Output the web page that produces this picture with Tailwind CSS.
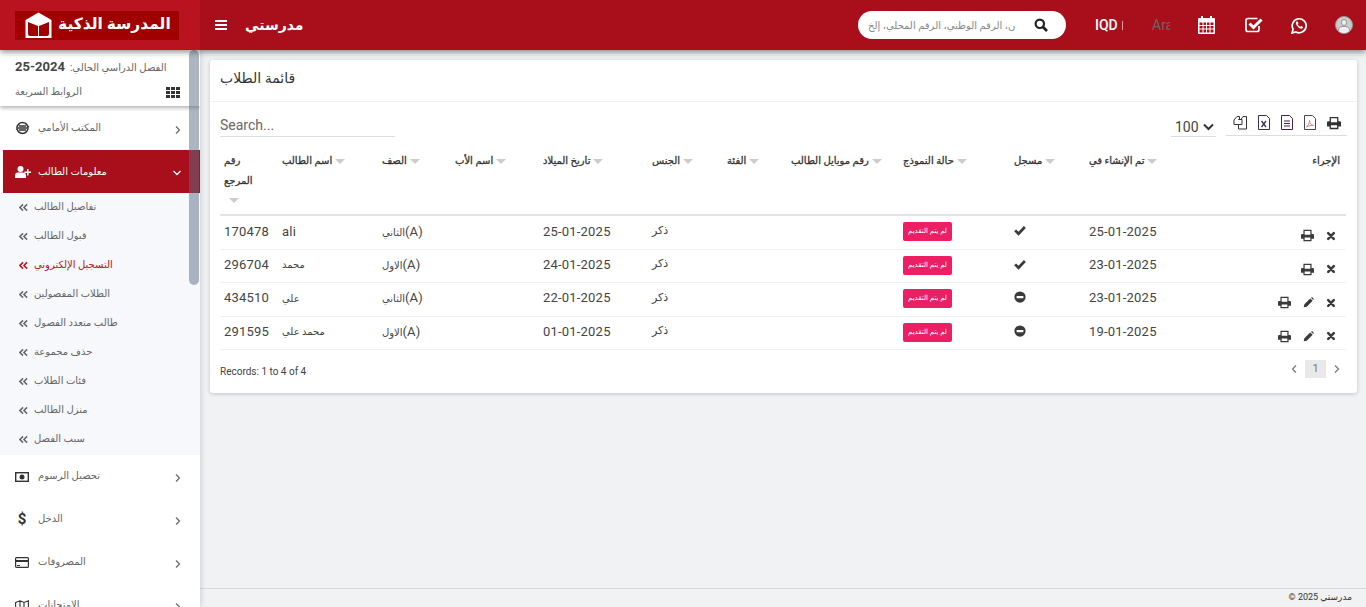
<!DOCTYPE html>
<html lang="ar">
<head>
    <meta charset="UTF-8">
    <title>مدرستي</title>
    <script src="https://cdn.jsdelivr.net/npm/@tailwindcss/browser@4"></script>
</head>
<body class="h-screen overflow-hidden flex flex-col bg-[#f1f2f4] text-[#444] font-['Roboto','DejaVu_Sans',sans-serif]">
    <svg class="hidden">
        <symbol id="print" viewBox="0 0 16 16"><path fill-rule="evenodd" d="M3 1h10v5h1.500A1.500 1.500 0 0 1 16 7.500V12h-3v3H3v-3H0V7.500A1.500 1.500 0 0 1 1.500 6H3zM4.500 2.500V7h7V2.500zM4.500 10.500v3h7v-3z" fill="currentColor"/></symbol>
        <symbol id="times" viewBox="0 0 16 16"><path d="M3.500 3.500l9 9M12.500 3.500l-9 9" stroke="currentColor" stroke-width="4" fill="none" stroke-linecap="round"/></symbol>
        <symbol id="pencil" viewBox="0 0 16 16"><path d="M1 15l1-4.500L10.500 2l3.500 3.500L5.500 14zM11.500 1l.7-.4a1.500 1.500 0 0 1 1.800.2l1.200 1.200a1.500 1.500 0 0 1 .2 1.800l-.4.700z" fill="currentColor"/></symbol>
        <symbol id="check" viewBox="0 0 16 16"><path d="M1.500 8.500l4.500 4.500 8.500-9" stroke="currentColor" stroke-width="3.600" fill="none"/></symbol>
        <symbol id="minus" viewBox="0 0 16 16"><path fill-rule="evenodd" d="M8 0.500a7.500 7.500 0 1 0 0 15A7.500 7.500 0 0 0 8 0.500zM3.500 6.500h9v3h-9z" fill="currentColor"/></symbol>
        <symbol id="chev" viewBox="0 0 8 10"><path d="M2 1.500L5.500 5 2 8.500" stroke="currentColor" stroke-width="1.200" fill="none"/></symbol>
        <symbol id="dbl" viewBox="0 0 10 10"><path d="M4.500 1.500L1 5l3.500 3.500M9 1.500L5.500 5 9 8.500" stroke="currentColor" stroke-width="1.700" fill="none"/></symbol>
    </svg>

    <!-- header -->
    <header class="h-[50px] flex shrink-0 bg-[#a90e1b] text-white shadow-[0_2px_6px_rgba(0,0,0,0.45)] z-20 relative">
        <div class="w-[200px] bg-[#b91320] flex items-center pl-[15px] shrink-0">
            <div class="w-[164px] h-[29px] bg-[#a00000] flex items-center pl-[10px] gap-[6px]">
                <svg class="shrink-0" width="27" height="27" viewBox="0 0 27 27"><path d="M13.500 0.500L26.500 8v18H0.500V8z" fill="#fff"/><path d="M3 10l10 4v10H5a2 2 0 0 1-2-2zM24 10l-10 4v10h8a2 2 0 0 0 2-2z" fill="#a00000"/></svg>
                <span dir="rtl" class="text-[15.5px] font-bold whitespace-nowrap leading-none">المدرسة الذكية</span>
            </div>
        </div>
        <div class="flex-1 flex items-center pl-[15px] pr-[13px]">
            <svg width="12" height="10" viewBox="0 0 12 10" fill="#fff"><path d="M0 0h12v2H0zM0 4h12v2H0zM0 8h12v2H0z"/></svg>
            <span dir="rtl" class="ml-[18px] text-[14px] font-bold">مدرستي</span>
            <div class="ml-auto w-[208px] h-[28px] rounded-full bg-white flex items-center pl-[10px] pr-[18px]">
                <div class="w-[147px] overflow-hidden whitespace-nowrap text-[10px] text-[#888]"><span dir="rtl">ابحث بالعنوان، الرقم الوطني، الرقم المحلي، إلخ</span></div>
                <svg class="ml-auto text-[#222]" width="14" height="14" viewBox="0 0 14 14"><circle cx="5.800" cy="5.800" r="4.200" stroke="currentColor" stroke-width="2.200" fill="none"/><path d="M9 9l4 4" stroke="currentColor" stroke-width="2.600"/></svg>
            </div>
            <div class="w-[23px] ml-[29px] text-[14px] font-medium">IQD</div>
            <div class="w-px h-[9px] bg-white/60 ml-[4px]"></div>
            <div class="w-[18px] ml-[29px] text-[14px] text-[#666] overflow-hidden">Ara</div>
            <svg class="ml-[28px]" width="17" height="18" viewBox="0 0 17 18" fill="#fff"><path fill-rule="evenodd" d="M3 0h2v2h7V0h2v2h2a1 1 0 0 1 1 1v14a1 1 0 0 1-1 1H1a1 1 0 0 1-1-1V3a1 1 0 0 1 1-1h2zM1.500 6.500v2.500h3V6.500zM5.500 6.500v2.500h2.500V6.500zM9 6.500v2.500h2.500V6.500zM12.500 6.500v2.500h3V6.500zM1.500 10v2.500h3V10zM5.500 10v2.500h2.500V10zM9 10v2.500h2.500V10zM12.500 10v2.500h3V10zM1.500 13.500v3h3v-3zM5.500 13.500v3h2.500v-3zM9 13.500v3h2.500v-3zM12.500 13.500v3h3v-3z"/></svg>
            <svg class="ml-[30px]" width="18" height="16" viewBox="0 0 18 16"><path d="M14 9v3.500A2 2 0 0 1 12 14.500H3a2 2 0 0 1-2-2v-9a2 2 0 0 1 2-2h9.500" stroke="#fff" stroke-width="1.700" fill="none"/><path d="M4.500 6.500l4 4L16.500 2.500" stroke="#fff" stroke-width="3" fill="none"/></svg>
            <svg class="ml-[28px]" width="17" height="17" viewBox="0 0 17 17"><path d="M1 16l1.100-3.800A7 7 0 1 1 4.800 14.900z" stroke="#fff" stroke-width="1.700" fill="none"/><path d="M5.500 4.500c-1 1-.8 2.500.5 4.300s3 2.900 4.400 2.900c1 0 1.600-.7 1.700-1.600l-2-1.200-.9.900c-1-.4-2-1.400-2.500-2.500l.8-.9-1-2z" fill="#fff"/></svg>
            <div class="ml-[27px] w-[18px] h-[18px] shrink-0 rounded-full bg-[#ccc] relative overflow-hidden border border-[#999]">
                <div class="absolute left-[5px] top-[2px] w-[6px] h-[7px] rounded-full bg-[#eee] border border-[#999]"></div>
                <div class="absolute left-[2px] top-[9px] w-[12px] h-[9px] rounded-t bg-[#eee] border border-[#999]"></div>
            </div>
        </div>
    </header>

    <div class="flex-1 flex min-h-0">
        <!-- sidebar -->
        <aside class="w-[200px] shrink-0 bg-white relative shadow-[1px_0_6px_rgba(0,0,0,0.15)] z-10 overflow-hidden text-[10px] text-[#666]">
            <div class="h-[56px] pl-[15px] pr-[20px] pt-[8px] shadow-[0_2px_4px_rgba(0,0,0,0.3)] relative">
                <div class="flex items-center h-[18px] gap-[5px] whitespace-nowrap">
                    <span class="text-[13px] font-bold text-[#444]">25-2024</span>
                    <span dir="rtl">الفصل الدراسي الحالي:</span>
                </div>
                <div class="flex items-center justify-between h-[18px] mt-[6px]">
                    <span dir="rtl">الروابط السريعة</span>
                    <svg class="mt-[2px]" width="14" height="11" viewBox="0 0 14 11" fill="#333"><path d="M0 0h4v3H0zM5 0h4v3H5zM10 0h4v3h-4zM0 4h4v3H0zM5 4h4v3H5zM10 4h4v3h-4zM0 8h4v3H0zM5 8h4v3H5zM10 8h4v3h-4z"/></svg>
                </div>
            </div>

            <div class="h-[44px] flex items-center pl-[15px] pr-[18px] gap-[8px]">
                <svg class="shrink-0" width="15" height="14" viewBox="0 0 15 14"><circle cx="7.500" cy="7" r="5.500" stroke="#333" stroke-width="1.500" fill="none"/><path d="M4 5h7M3 7h9M4 9h7" stroke="#333" stroke-width="1.300"/><path d="M0.500 8.500l2-1 .5 1.500zM14.500 5.500l-2 1-.5-1.500z" fill="#333"/></svg>
                <span dir="rtl" class="-mt-[1px]">المكتب الأمامي</span>
                <svg class="ml-auto mt-[4px]" width="8" height="10"><use href="#chev"/></svg>
            </div>

            <div class="h-[43px] ml-[3px] bg-[#a90e1b] text-white flex items-center pl-[12px] pr-[18px] gap-[7px] font-medium">
                <svg class="shrink-0" width="16" height="12" viewBox="0 0 16 12" fill="#fff"><circle cx="5.500" cy="3" r="3"/><path d="M0 12V9.500A3 3 0 0 1 3 6.500h5a3 3 0 0 1 3 3V12zM12 3h1.500v2.500H16V7h-2.500v2.500H12V7H9.500V5.500H12z"/></svg>
                <span dir="rtl" class="-mt-[1px]">معلومات الطالب</span>
                <svg class="ml-auto mt-[3px]" width="10" height="8" viewBox="0 0 10 8"><path d="M1.500 2L5 5.500 8.500 2" stroke="#fff" stroke-width="1.300" fill="none"/></svg>
            </div>

            <ul class="bg-[#f7f8fb] h-[262px]">
                <li class="h-[29px] flex items-center pl-[19px] gap-[6px]"><svg width="9" height="9"><use href="#dbl"/></svg><span dir="rtl" class="-mt-[2px]">تفاصيل الطالب</span></li>
                <li class="h-[29px] flex items-center pl-[19px] gap-[6px]"><svg width="9" height="9"><use href="#dbl"/></svg><span dir="rtl" class="-mt-[2px]">قبول الطالب</span></li>
                <li class="h-[29px] flex items-center pl-[19px] gap-[6px] text-[#b91320]"><svg width="9" height="9"><use href="#dbl"/></svg><span dir="rtl" class="-mt-[2px]">التسجيل الإلكتروني</span></li>
                <li class="h-[29px] flex items-center pl-[19px] gap-[6px]"><svg width="9" height="9"><use href="#dbl"/></svg><span dir="rtl" class="-mt-[2px]">الطلاب المفصولين</span></li>
                <li class="h-[29px] flex items-center pl-[19px] gap-[6px]"><svg width="9" height="9"><use href="#dbl"/></svg><span dir="rtl" class="-mt-[2px]">طالب متعدد الفصول</span></li>
                <li class="h-[29px] flex items-center pl-[19px] gap-[6px]"><svg width="9" height="9"><use href="#dbl"/></svg><span dir="rtl" class="-mt-[2px]">حذف مجموعة</span></li>
                <li class="h-[29px] flex items-center pl-[19px] gap-[6px]"><svg width="9" height="9"><use href="#dbl"/></svg><span dir="rtl" class="-mt-[2px]">فئات الطلاب</span></li>
                <li class="h-[29px] flex items-center pl-[19px] gap-[6px]"><svg width="9" height="9"><use href="#dbl"/></svg><span dir="rtl" class="-mt-[2px]">منزل الطالب</span></li>
                <li class="h-[29px] flex items-center pl-[19px] gap-[6px]"><svg width="9" height="9"><use href="#dbl"/></svg><span dir="rtl" class="-mt-[2px]">سبب الفصل</span></li>
            </ul>

            <div class="h-[43px] flex items-center pl-[15px] pr-[18px] gap-[9px]">
                <svg class="shrink-0" width="14" height="10" viewBox="0 0 14 10"><rect x="0.700" y="0.700" width="12.600" height="8.600" stroke="#333" stroke-width="1.400" fill="none"/><circle cx="7" cy="5" r="2.500" fill="#333"/></svg>
                <span dir="rtl" class="-mt-[2px]">تحصيل الرسوم</span>
                <svg class="ml-auto mt-[3px]" width="8" height="10"><use href="#chev"/></svg>
            </div>
            <div class="h-[43px] flex items-center pl-[15px] pr-[18px] gap-[9px]">
                <span class="w-[14px] text-[15px] font-bold text-[#333] text-center">$</span>
                <span dir="rtl" class="-mt-[2px]">الدخل</span>
                <svg class="ml-auto mt-[3px]" width="8" height="10"><use href="#chev"/></svg>
            </div>
            <div class="h-[43px] flex items-center pl-[15px] pr-[18px] gap-[9px]">
                <svg class="shrink-0" width="14" height="11" viewBox="0 0 14 11"><rect x="0.600" y="0.600" width="12.800" height="9.800" rx="1" stroke="#333" stroke-width="1.200" fill="none"/><path d="M0 3h14v2H0zM2 8h3v1H2z" fill="#333"/></svg>
                <span dir="rtl" class="-mt-[2px]">المصروفات</span>
                <svg class="ml-auto mt-[3px]" width="8" height="10"><use href="#chev"/></svg>
            </div>
            <div class="h-[43px] flex items-center pl-[15px] pr-[18px] gap-[9px]">
                <svg class="shrink-0" width="14" height="12" viewBox="0 0 14 12"><path d="M0.600 2.500L5 0.800l4 1.700 4.400-1.700v8.700L9 11.200 5 9.500 0.600 11.200zM5 0.800v8.700M9 2.500v8.700" stroke="#333" stroke-width="1.100" fill="none"/></svg>
                <span dir="rtl" class="-mt-[2px]">الامتحانات</span>
                <svg class="ml-auto mt-[3px]" width="8" height="10"><use href="#chev"/></svg>
            </div>

            <!-- scrollbar thumb -->
            <div class="absolute left-[189px] top-0 w-[10px] h-[235px] rounded-[5px] bg-[#5b6b85]/50"></div>
        </aside>

        <main class="flex-1 min-w-0 flex flex-col">
            <div class="flex-1 pt-[10px] pl-[10px] pr-[9px]">
                <section class="h-[333px] bg-white rounded-[3px] shadow-[0_1px_4px_rgba(0,0,0,0.2)]">
                    <div class="h-[42px] border-b border-[#f1f1f1] pl-[10px] pb-[4px] flex items-center">
                        <h1 dir="rtl" class="text-[14px] text-[#333]">قائمة الطلاب</h1>
                    </div>

                    <div class="h-[35px] mx-[10px] flex items-end">
                        <div class="w-[175px] h-[23px] border-b border-[#ddd] text-[14px] text-[#666] leading-[22px]">Search...</div>
                        <div class="ml-auto w-[45px] h-[23px] pt-[4px] border-b border-[#ddd] flex items-center gap-1 pl-1 text-[14px]">100
                            <svg width="11" height="8" viewBox="0 0 11 8"><path d="M1 1.500l4.500 4.500L10 1.500" stroke="#333" stroke-width="2" fill="none"/></svg>
                        </div>
                        <div class="ml-[10px] w-[121px] h-[26px] mb-px border-b border-[#ddd] flex items-center pl-[7px] gap-[11px]">
                            <svg width="14" height="15" viewBox="0 0 14 15" fill="none" stroke="#333"><path d="M5.500 4.500H9v5H1V5l3-3.500h2.500v3z"/><path d="M8 4.500l2-3h3.500V14H5.500V9.500"/></svg>
                            <svg width="12" height="15" viewBox="0 0 12 15" fill="none" stroke="#335"><path d="M.5.500h8l3 3v11H.5z"/><path d="M3.500 6l4.500 6M8 6l-4.500 6" stroke-width="1.300"/></svg>
                            <svg width="12" height="15" viewBox="0 0 12 15" fill="none" stroke="#424"><path d="M.5.500h8l3 3v11H.5z"/><path d="M3 6h6M3 8.500h6M3 11h6"/></svg>
                            <svg width="12" height="15" viewBox="0 0 12 15" fill="none" stroke="#446"><path d="M.5.500h8l3 3v11H.5z"/><path d="M2.500 12c2-1.500 3-4 3-6.500 0 2.500 1.500 4.500 4 5-2 0-5 .2-7 1.500z" stroke="#c88"/></svg>
                            <svg class="text-[#333]" width="14" height="14"><use href="#print"/></svg>
                        </div>
                    </div>

                    <table class="mx-[10px] w-[1126px] table-fixed border-collapse text-[13px] tracking-[0.2px] mt-[11px] [&_td]:pb-[2px]">
                        <colgroup>
                            <col class="w-[58px]"><col class="w-[100px]"><col class="w-[73px]"><col class="w-[88px]"><col class="w-[109px]"><col class="w-[75px]"><col class="w-[64px]"><col class="w-[112px]"><col class="w-[111px]"><col class="w-[75px]"><col class="w-[150px]"><col class="w-[111px]">
                        </colgroup>
                        <thead class="text-[10px] text-[#333] [-webkit-text-stroke:0.3px_#333] tracking-normal">
                            <tr class="border-b-2 border-[#e3e3e3] h-[67px] align-top">
                                <th class="px-[4px] pt-[3px] text-left font-normal leading-[20px]"><span dir="rtl">رقم</span><br><span dir="rtl">المرجع</span><i class="block mt-[7px] ml-[5px] w-0 h-0 border-x-[5px] border-t-[5px] border-x-transparent border-t-[#ccc]"></i></th>
                                <th class="px-[4px] pt-[3px] text-left font-normal leading-[20px]"><span dir="rtl">اسم الطالب</span><i class="inline-block ml-[3px] w-0 h-0 border-x-[5px] border-t-[5px] border-x-transparent border-t-[#ccc]"></i></th>
                                <th class="px-[4px] pt-[3px] text-left font-normal leading-[20px]"><span dir="rtl">الصف</span><i class="inline-block ml-[3px] w-0 h-0 border-x-[5px] border-t-[5px] border-x-transparent border-t-[#ccc]"></i></th>
                                <th class="px-[4px] pt-[3px] text-left font-normal leading-[20px]"><span dir="rtl">اسم الأب</span><i class="inline-block ml-[3px] w-0 h-0 border-x-[5px] border-t-[5px] border-x-transparent border-t-[#ccc]"></i></th>
                                <th class="px-[4px] pt-[3px] text-left font-normal leading-[20px]"><span dir="rtl">تاريخ الميلاد</span><i class="inline-block ml-[3px] w-0 h-0 border-x-[5px] border-t-[5px] border-x-transparent border-t-[#ccc]"></i></th>
                                <th class="px-[4px] pt-[3px] text-left font-normal leading-[20px]"><span dir="rtl">الجنس</span><i class="inline-block ml-[3px] w-0 h-0 border-x-[5px] border-t-[5px] border-x-transparent border-t-[#ccc]"></i></th>
                                <th class="px-[4px] pt-[3px] text-left font-normal leading-[20px]"><span dir="rtl">الفئة</span><i class="inline-block ml-[3px] w-0 h-0 border-x-[5px] border-t-[5px] border-x-transparent border-t-[#ccc]"></i></th>
                                <th class="px-[4px] pt-[3px] text-left font-normal leading-[20px] whitespace-nowrap"><span dir="rtl">رقم موبايل الطالب</span><i class="inline-block ml-[3px] w-0 h-0 border-x-[5px] border-t-[5px] border-x-transparent border-t-[#ccc]"></i></th>
                                <th class="px-[4px] pt-[3px] text-left font-normal leading-[20px]"><span dir="rtl">حالة النموذج</span><i class="inline-block ml-[3px] w-0 h-0 border-x-[5px] border-t-[5px] border-x-transparent border-t-[#ccc]"></i></th>
                                <th class="px-[4px] pt-[3px] text-left font-normal leading-[20px]"><span dir="rtl">مسجل</span><i class="inline-block ml-[3px] w-0 h-0 border-x-[5px] border-t-[5px] border-x-transparent border-t-[#ccc]"></i></th>
                                <th class="px-[4px] pt-[3px] text-left font-normal leading-[20px]"><span dir="rtl">تم الإنشاء في</span><i class="inline-block ml-[3px] w-0 h-0 border-x-[5px] border-t-[5px] border-x-transparent border-t-[#ccc]"></i></th>
                                <th class="px-[6px] pt-[3px] text-right font-normal leading-[20px]"><span dir="rtl">الإجراء</span></th>
                            </tr>
                        </thead>
                        <tbody>
                            <tr class="h-[34px] border-b border-[#f1f1f1]">
                                <td class="px-[4px]">170478</td><td class="px-[4px]">ali</td>
                                <td class="px-[4px]"><span class="text-[10px]" dir="rtl">الثاني</span>(A)</td><td></td>
                                <td class="px-[4px]">25-01-2025</td><td class="px-[4px] text-[11px]"><span dir="rtl">ذكر</span></td><td></td><td></td>
                                <td class="px-[4px]"><span dir="rtl" class="inline-block w-[49px] h-[19px] leading-[19px] rounded-[2px] bg-[#ec1e64] text-white text-[7px] tracking-normal whitespace-nowrap text-center align-middle">لم يتم التقديم</span></td>
                                <td class="px-[4px]"><svg class="text-[#3a3a3a] mb-[2px]" width="12" height="12"><use href="#check"/></svg></td>
                                <td class="px-[4px]">25-01-2025</td>
                                <td class="px-[10px]"><div class="flex justify-end items-center gap-[12px] pt-[9px]"><svg class="text-[#3a3a3a]" width="13" height="13"><use href="#print"/></svg><svg class="text-[#3a3a3a]" width="10" height="10"><use href="#times"/></svg></div></td>
                            </tr>
                            <tr class="h-[33px] border-b border-[#f1f1f1]">
                                <td class="px-[4px]">296704</td><td class="px-[4px] text-[10px]"><span dir="rtl">محمد</span></td>
                                <td class="px-[4px]"><span class="text-[10px]" dir="rtl">الاول</span>(A)</td><td></td>
                                <td class="px-[4px]">24-01-2025</td><td class="px-[4px] text-[11px]"><span dir="rtl">ذكر</span></td><td></td><td></td>
                                <td class="px-[4px]"><span dir="rtl" class="inline-block w-[49px] h-[19px] leading-[19px] rounded-[2px] bg-[#ec1e64] text-white text-[7px] tracking-normal whitespace-nowrap text-center align-middle">لم يتم التقديم</span></td>
                                <td class="px-[4px]"><svg class="text-[#3a3a3a] mb-[2px]" width="12" height="12"><use href="#check"/></svg></td>
                                <td class="px-[4px]">23-01-2025</td>
                                <td class="px-[10px]"><div class="flex justify-end items-center gap-[12px] pt-[9px]"><svg class="text-[#3a3a3a]" width="13" height="13"><use href="#print"/></svg><svg class="text-[#3a3a3a]" width="10" height="10"><use href="#times"/></svg></div></td>
                            </tr>
                            <tr class="h-[34px] border-b border-[#f1f1f1]">
                                <td class="px-[4px]">434510</td><td class="px-[4px] text-[10px]"><span dir="rtl">علي</span></td>
                                <td class="px-[4px]"><span class="text-[10px]" dir="rtl">الثاني</span>(A)</td><td></td>
                                <td class="px-[4px]">22-01-2025</td><td class="px-[4px] text-[11px]"><span dir="rtl">ذكر</span></td><td></td><td></td>
                                <td class="px-[4px]"><span dir="rtl" class="inline-block w-[49px] h-[19px] leading-[19px] rounded-[2px] bg-[#ec1e64] text-white text-[7px] tracking-normal whitespace-nowrap text-center align-middle">لم يتم التقديم</span></td>
                                <td class="px-[4px]"><svg class="text-[#3a3a3a] mb-[2px]" width="12" height="12"><use href="#minus"/></svg></td>
                                <td class="px-[4px]">23-01-2025</td>
                                <td class="px-[10px]"><div class="flex justify-end items-center gap-[12px] pt-[9px]"><svg class="text-[#3a3a3a]" width="13" height="13"><use href="#print"/></svg><svg class="text-[#3a3a3a]" width="11" height="11"><use href="#pencil"/></svg><svg class="text-[#3a3a3a]" width="10" height="10"><use href="#times"/></svg></div></td>
                            </tr>
                            <tr class="h-[33px] border-b border-[#f1f1f1]">
                                <td class="px-[4px]">291595</td><td class="px-[4px] text-[10px]"><span dir="rtl">محمد علي</span></td>
                                <td class="px-[4px]"><span class="text-[10px]" dir="rtl">الاول</span>(A)</td><td></td>
                                <td class="px-[4px]">01-01-2025</td><td class="px-[4px] text-[11px]"><span dir="rtl">ذكر</span></td><td></td><td></td>
                                <td class="px-[4px]"><span dir="rtl" class="inline-block w-[49px] h-[19px] leading-[19px] rounded-[2px] bg-[#ec1e64] text-white text-[7px] tracking-normal whitespace-nowrap text-center align-middle">لم يتم التقديم</span></td>
                                <td class="px-[4px]"><svg class="text-[#3a3a3a] mb-[2px]" width="12" height="12"><use href="#minus"/></svg></td>
                                <td class="px-[4px]">19-01-2025</td>
                                <td class="px-[10px]"><div class="flex justify-end items-center gap-[12px] pt-[9px]"><svg class="text-[#3a3a3a]" width="13" height="13"><use href="#print"/></svg><svg class="text-[#3a3a3a]" width="11" height="11"><use href="#pencil"/></svg><svg class="text-[#3a3a3a]" width="10" height="10"><use href="#times"/></svg></div></td>
                            </tr>
                        </tbody>
                    </table>

                    <div class="mx-[10px] mt-[12px] h-[20px] flex items-center text-[10px] text-[#444]">
                        <span>Records: 1 to 4 of 4</span>
                        <div class="ml-auto mr-[6px] -mt-[5px] flex items-center text-[11px] text-[#777]">
                            <svg class="rotate-180 mr-[7px]" width="8" height="10"><use href="#chev"/></svg>
                            <span class="w-[21px] h-[18px] bg-[#e9e9e9] text-center leading-[18px]">1</span>
                            <svg class="ml-[7px]" width="8" height="10"><use href="#chev"/></svg>
                        </div>
                    </div>
                </section>
            </div>
            <footer class="h-[19px] shrink-0 border-t border-[#d8dae0] flex items-center justify-end pr-[14px] text-[9px] text-[#333]">
                <span dir="rtl">مدرستي 2025 ©</span>
            </footer>
        </main>
    </div>
</body>
</html>
